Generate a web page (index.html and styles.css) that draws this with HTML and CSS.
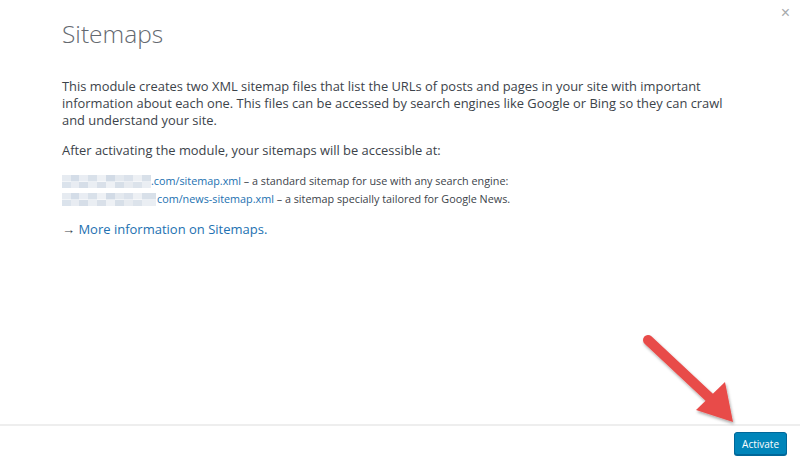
FILE: index.html
```html
<!DOCTYPE html>
<html lang="en">
<head>
<meta charset="UTF-8">
<meta name="viewport" content="width=device-width, initial-scale=1.0">
<title>Sitemaps</title>
<link rel="stylesheet" href="styles.css">
</head>
<body>
<div class="modal">
  <button class="close" aria-label="Close">&times;</button>
  <div class="modal-body">
    <h1>Sitemaps</h1>
    <p class="intro">This module creates two XML sitemap files that list the URLs of posts and pages in your site with important information about each one. This files can be accessed by search engines like Google or Bing so they can crawl and understand your site.</p>
    <p class="intro">After activating the module, your sitemaps will be accessible at:</p>
    <ul class="urls">
      <li><span class="blur b1"></span><a href="#">.com/sitemap.xml</a> – a standard sitemap for use with any search engine:</li>
      <li><span class="blur b2"></span><a href="#">com/news-sitemap.xml</a> – a sitemap specially tailored for Google News.</li>
    </ul>
    <p class="more">→ <a href="#">More information on Sitemaps.</a></p>
  </div>
  <div class="modal-footer">
    <button class="activate">Activate</button>
  </div>
</div>
<svg class="arrow" width="120" height="110" viewBox="0 0 120 110">
  <defs>
    <filter id="sh" x="-20%" y="-20%" width="150%" height="150%">
      <feDropShadow dx="1" dy="2" stdDeviation="1.5" flood-color="#000" flood-opacity="0.35"/>
    </filter>
  </defs>
  <g filter="url(#sh)">
    <line x1="10" y1="10" x2="72" y2="68" stroke="#e84c4a" stroke-width="10" stroke-linecap="round"/>
    <polygon points="58,80 87,52 95,92" fill="#e84c4a"/>
  </g>
</svg>
</body>
</html>
```

FILE: styles.css
```css
body {
  margin: 0;
  width: 800px;
  height: 461px;
  overflow: hidden;
  background: #fff;
  font-family: 'Open Sans', sans-serif;
  color: #3c434a;
  position: relative;
}
.modal {
  display: flex;
  flex-direction: column;
  height: 461px;
}
.close {
  position: absolute;
  top: 4px;
  right: 10px;
  background: none;
  border: none;
  font-size: 16px;
  color: #a7aaad;
  cursor: pointer;
  padding: 0;
}
.modal-body {
  flex: 1;
  padding: 17px 62px 0;
}
h1 {
  font-weight: 300;
  font-size: 24.5px;
  color: #646970;
  margin: 0 0 27px;
  line-height: 34px;
}
.intro {
  font-size: 12.9px;
  line-height: 17px;
  margin: 0 0 13px;
}
.urls {
  list-style: none;
  padding: 0;
  margin: 13px 0 12px;
  font-size: 10.8px;
  line-height: 18px;
}
.blur {
  display: inline-block;
  height: 13px;
  vertical-align: -3px;
  background:
    linear-gradient(90deg, #e6ebf1 0 9px, #d4dde8 9px 17px, #e9edf3 17px 26px, #d9e1ea 26px 35px, #eef1f5 35px 44px, #d2dbe6 44px 53px, #e4e9ef 53px 62px, #dbe2eb 62px 71px, #edf0f4 71px 80px, #d8e0e9 80px 100px) top / 100% 50% no-repeat,
    linear-gradient(90deg, #dbe3ec 0 9px, #e8ecf2 9px 17px, #d6dee8 17px 26px, #eaeef3 26px 35px, #d9e0e9 35px 44px, #eef1f5 44px 53px, #d7dfe8 53px 62px, #e7ebf0 62px 71px, #dce3eb 71px 80px, #eaeef3 80px 100px) bottom / 100% 50% no-repeat;
  filter: blur(0.6px);
}
.b1 { width: 89px; }
.b2 { width: 94px; margin-right: 1px; }
a {
  color: #2271b1;
  text-decoration: none;
}
.more {
  font-size: 13px;
  margin: 0;
}
.modal-footer {
  border-top: 2px solid #eee;
  height: 35px;
  display: flex;
  justify-content: flex-end;
  align-items: center;
  padding: 0 13px 0 0;
}
.activate {
  background: #0085ba;
  border: 1px solid #006799;
  border-radius: 3px;
  color: #fff;
  font-family: 'Open Sans', sans-serif;
  font-size: 10px;
  height: 23px;
  padding: 0 7px;
  box-shadow: 0 1px 0 #006799;
  cursor: pointer;
}
.arrow {
  position: absolute;
  left: 638px;
  top: 330px;
}
```
